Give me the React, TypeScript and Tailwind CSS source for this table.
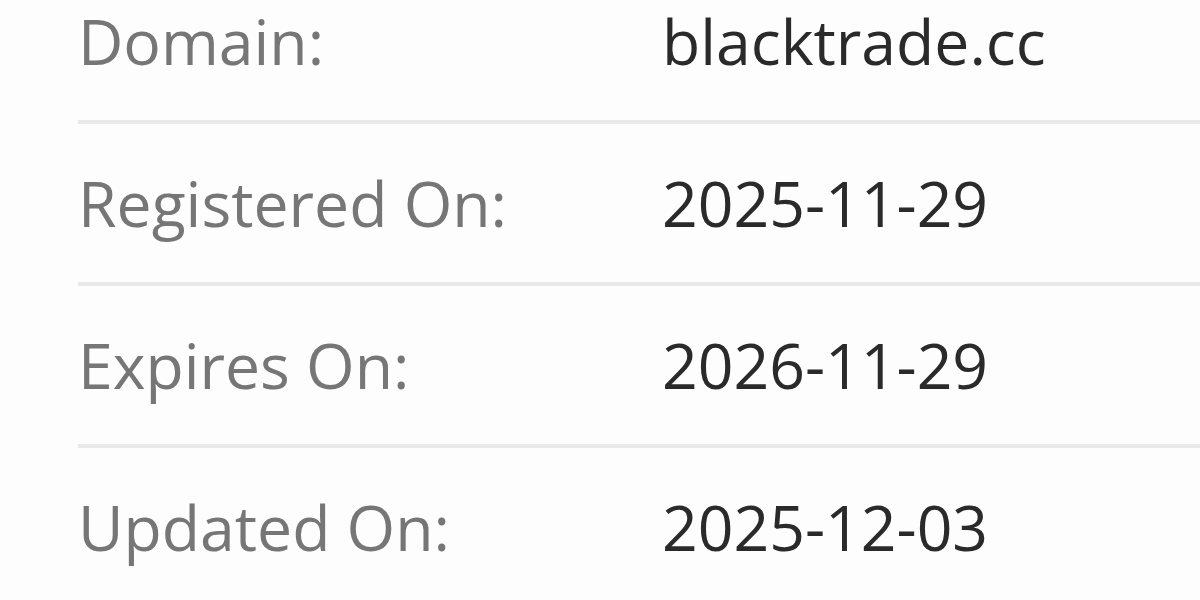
import React from "react";

const rows: [string, string][] = [
  ["Domain:", "blacktrade.cc"],
  ["Registered On:", "2025-11-29"],
  ["Expires On:", "2026-11-29"],
  ["Updated On:", "2025-12-03"],
];

export default function App() {
  return (
    <div className="w-[1200px] h-[600px] overflow-hidden bg-[#fdfdfd]" style={{ fontFamily: '"Open Sans", sans-serif' }}>
      <div className="pl-[78px] -mt-[38px]">
        {rows.map(([k, v]) => (
          <div key={k} className="flex items-center h-[162px] border-b-[4px] border-[#e9e9e9]">
            <div className="w-[584px] shrink-0 text-[62.5px] text-[#767676]">{k}</div>
            <div className="text-[62.5px] text-[#2a2a2a]">{v}</div>
          </div>
        ))}
      </div>
    </div>
  );
}
